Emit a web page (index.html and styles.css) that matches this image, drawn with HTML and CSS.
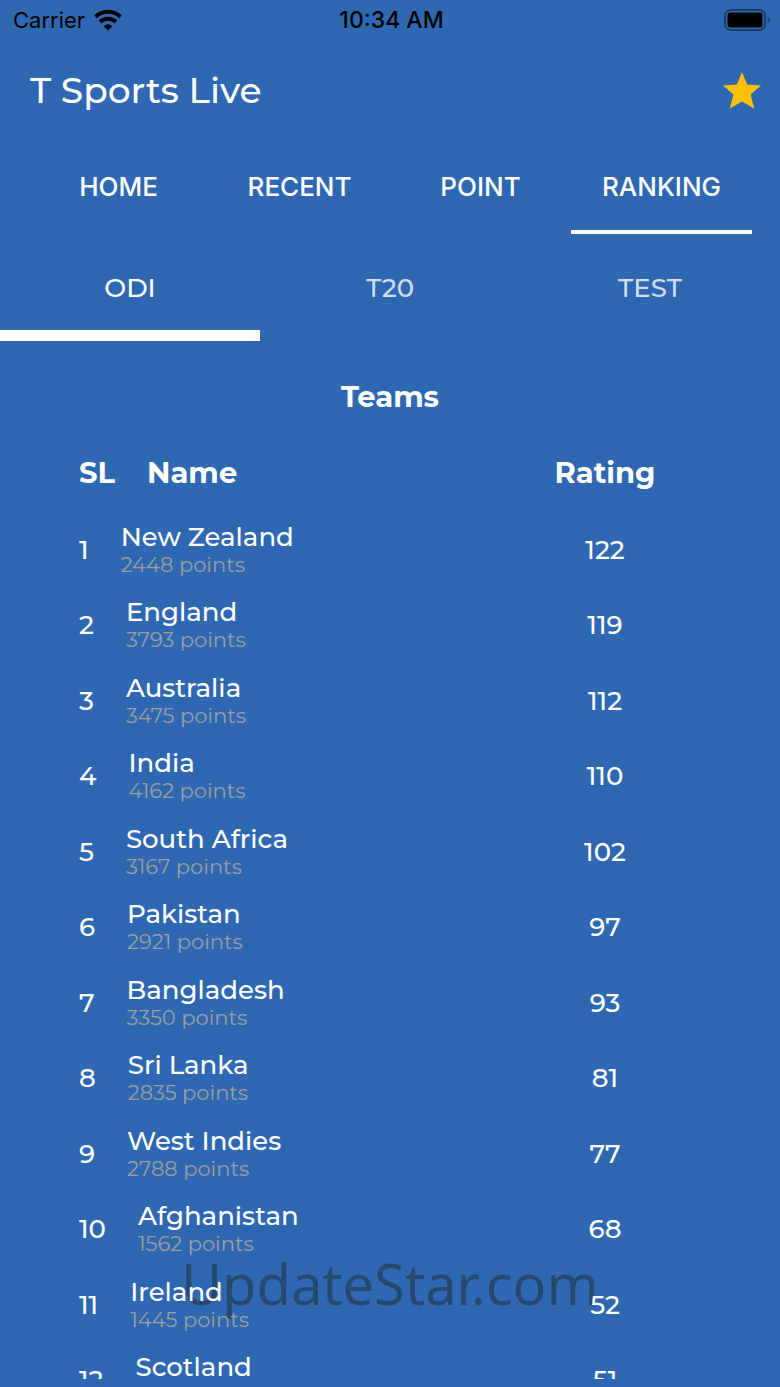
FILE: index.html
```html
<!DOCTYPE html>
<html lang="en">
<head>
<meta charset="utf-8">
<meta name="viewport" content="width=device-width, initial-scale=1">
<title>T Sports Live</title>
<link rel="stylesheet" href="styles.css">
</head>
<body>
<div class="app">
  <div class="status">
    <span class="status-carrier">Carrier
      <svg class="wifi" viewBox="0 0 28 23" aria-hidden="true"><path d="M14 21.5 L9.8 17.2 Q14 13.4 18.2 17.2 Z"/><path class="arc" d="M6 12.9 A11.6 11.6 0 0 1 22 12.9"/><path class="arc" d="M1.5 7.8 A18 18 0 0 1 26.5 7.8"/></svg>
    </span>
    <span class="status-time">10:34 AM</span>
    <span class="status-battery">
      <svg class="battery" viewBox="0 0 46 22" aria-hidden="true"><rect class="shell" x="1" y="1" width="40" height="20" rx="6"/><rect x="3.5" y="3.5" width="35" height="15" rx="3"/><path class="cap" d="M43.5 7.5 Q46 9 46 11 T43.5 14.5 Z"/></svg>
    </span>
  </div>

  <header class="header">
    <h1 class="title">T Sports Live</h1>
    <button class="star-button" type="button" aria-label="Favourite">
      <svg class="star" viewBox="0 0 38 37" aria-hidden="true"><path d="M19 0 L24.2 12.6 L38 13.4 L27.6 22.6 L31.2 36.4 L19 29.6 L6.8 36.4 L10.4 22.6 L0 13.4 L13.8 12.6 Z"/></svg>
    </button>
  </header>

  <nav class="tabs" aria-label="Sections">
    <button class="tab" type="button">HOME</button>
    <button class="tab" type="button">RECENT</button>
    <button class="tab" type="button">POINT</button>
    <button class="tab tab-active" type="button" aria-current="page">RANKING</button>
  </nav>

  <nav class="formats" aria-label="Formats">
    <button class="format format-active" type="button" aria-current="page">ODI</button>
    <button class="format" type="button">T20</button>
    <button class="format" type="button">TEST</button>
  </nav>

  <main class="ranking">
    <h2 class="ranking-title">Teams</h2>
    <table class="teams">
      <thead>
        <tr class="head"><th>SL</th><th class="name">Name</th><th class="rating">Rating</th></tr>
      </thead>
      <tbody>
        <tr class="team"><td>1</td><td class="name">New Zealand<span class="points">2448 points</span></td><td class="rating">122</td></tr>
        <tr class="team"><td>2</td><td class="name">England<span class="points">3793 points</span></td><td class="rating">119</td></tr>
        <tr class="team"><td>3</td><td class="name">Australia<span class="points">3475 points</span></td><td class="rating">112</td></tr>
        <tr class="team"><td>4</td><td class="name">India<span class="points">4162 points</span></td><td class="rating">110</td></tr>
        <tr class="team"><td>5</td><td class="name">South Africa<span class="points">3167 points</span></td><td class="rating">102</td></tr>
        <tr class="team"><td>6</td><td class="name">Pakistan<span class="points">2921 points</span></td><td class="rating">97</td></tr>
        <tr class="team"><td>7</td><td class="name">Bangladesh<span class="points">3350 points</span></td><td class="rating">93</td></tr>
        <tr class="team"><td>8</td><td class="name">Sri Lanka<span class="points">2835 points</span></td><td class="rating">81</td></tr>
        <tr class="team"><td>9</td><td class="name">West Indies<span class="points">2788 points</span></td><td class="rating">77</td></tr>
        <tr class="team"><td>10</td><td class="name">Afghanistan<span class="points">1562 points</span></td><td class="rating">68</td></tr>
        <tr class="team"><td>11</td><td class="name">Ireland<span class="points">1445 points</span></td><td class="rating">52</td></tr>
        <tr class="team"><td>12</td><td class="name">Scotland<span class="points">&nbsp;</span></td><td class="rating">51</td></tr>
      </tbody>
    </table>
  </main>
  <div class="watermark">UpdateStar.com</div>
</div>
</body>
</html>
```
FILE: styles.css
```css
* { box-sizing: border-box; }

body {
  margin: 0;
  background: #2f68b2;
  color: #fff;
  font-family: Montserrat, Inter, sans-serif;
  font-size: 26px;
  font-weight: 500;
}

button {
  margin: 0;
  padding: 0;
  border: 0;
  background: none;
  color: inherit;
  font: inherit;
}

.app {
  position: relative;
  isolation: isolate;
  display: flex;
  flex-direction: column;
  height: 100vh;
  padding-bottom: 8px;
  overflow: hidden;
}

/* Status bar */
.status {
  display: grid;
  grid-template-columns: 1fr auto 1fr;
  align-items: center;
  flex: none;
  height: 40px;
  padding: 0 10px 0 13px;
  color: #000;
  font-family: Inter, sans-serif;
  font-size: 22px;
  font-weight: 400;
}
.status-carrier { display: flex; align-items: center; gap: 9px; }
.status-time { font-size: 23px; font-weight: 500; }
.status-battery { display: flex; justify-content: flex-end; }
.wifi { width: 28px; height: 23px; }
.arc { fill: none; stroke: #000; stroke-width: 4; }
.battery { width: 46px; height: 22px; }
.shell { fill: none; stroke: #1b3d69; stroke-width: 2; }
.cap { fill: #1b3d69; }

/* Title bar */
.header {
  display: flex;
  align-items: center;
  justify-content: space-between;
  flex: none;
  height: 102px;
  padding: 0 19px 2px 30px;
}
.title { margin: 0; font-size: 36px; font-weight: 500; }
.star-button { display: flex; }
.star { width: 38px; height: 37px; fill: #ffc107; }

/* Section tabs */
.tabs {
  display: flex;
  flex: none;
  height: 92px;
  padding: 0 28px;
  font-family: Inter, sans-serif;
}
.tab { flex: 1; border-bottom: 4px solid transparent; }
.tab-active { border-color: #fff; }

/* Format tabs */
.formats { display: flex; flex: none; height: 107px; }
.format {
  flex: 1;
  padding-top: 11px;
  border-bottom: 11px solid transparent;
  color: rgba(255, 255, 255, 0.8);
}
.format-active { border-color: #fff; color: #fff; }

/* Ranking list */
.ranking { flex: 1; min-height: 0; overflow: hidden; }
.ranking-title {
  margin: 0;
  padding-top: 38px;
  font-size: 29px;
  font-weight: 700;
  line-height: 36px;
  text-align: center;
}
.teams, .teams thead, .teams tbody { display: block; }
.head, .team {
  display: flex;
  align-items: center;
  gap: 32px;
  padding: 0 115px 0 79px;
}
.head { height: 97px; padding-top: 18px; font-size: 29px; line-height: 36px; }
.head th { padding: 0; font-weight: 700; text-align: left; }
.team { height: 75px; line-height: 30px; }
.team:nth-child(even) { height: 76px; }
.team td { padding: 0; }
.teams .name { flex: 1; }
.teams .rating { width: 120px; text-align: center; }
.points {
  display: block;
  color: #9e9e9e;
  font-size: 21px;
  font-weight: 400;
  line-height: 26px;
}

.watermark {
  position: absolute;
  right: 0;
  bottom: 64px;
  left: 0;
  z-index: -1;
  color: #28496f;
  font-family: "Noto Sans", sans-serif;
  font-size: 56px;
  font-weight: 400;
  line-height: 80px;
  text-align: center;
}
```
